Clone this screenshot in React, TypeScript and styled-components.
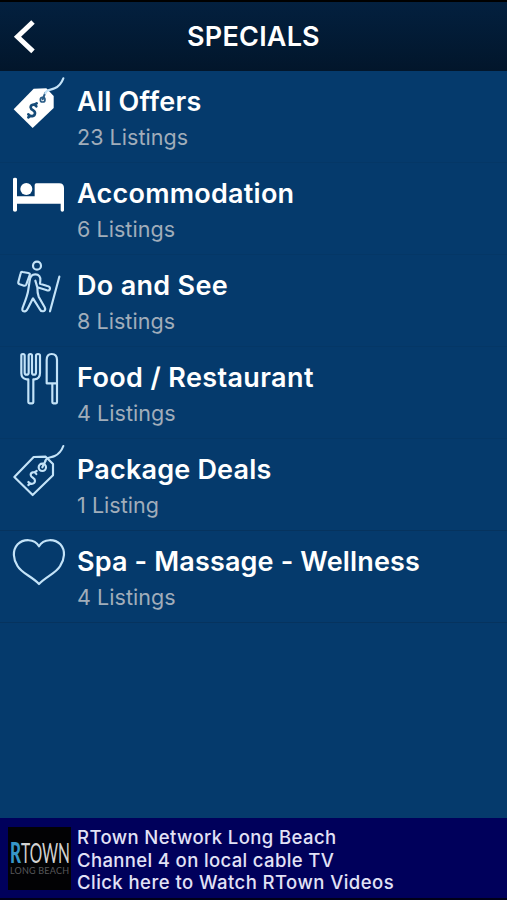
import React from "react";
import styled, { createGlobalStyle } from "styled-components";

const GlobalStyle = createGlobalStyle`
  * { box-sizing: border-box; }
  body { margin: 0; background: #053a6c; }
`;

const Screen = styled.main`
  display: flex;
  flex-direction: column;
  width: 507px;
  height: 900px;
  overflow: hidden;
  background: #053a6c;
  color: #fff;
  font-family: Inter, "Liberation Sans", sans-serif;
`;

const Header = styled.header`
  display: grid;
  grid-template-columns: 60px 1fr 60px;
  align-items: center;
  height: 71px;
  flex: none;
  border-top: 2px solid #000;
  background: linear-gradient(#03203f, #02162b);
`;

const BackButton = styled.button`
  height: 69px;
  padding: 0;
  border: 0;
  background: none;
  svg { display: block; }
`;

const PageTitle = styled.h1`
  margin: 1px 0 0;
  text-align: center;
  font-size: 27px;
  font-weight: 600;
  line-height: 34px;
  letter-spacing: 0.2px;
`;

const List = styled.ul`
  flex: 1;
  margin: 0;
  padding: 0;
  list-style: none;
`;

const Row = styled.li`
  display: flex;
  height: 92px;
  border-bottom: 1px solid #053766;
  &:nth-last-child(-n + 2) { border-bottom-color: #06335e; }
`;

const RowIcon = styled.svg`
  flex: none;
  width: 77px;
  height: 92px;
  fill: none;
  stroke: #c4e3f8;
  stroke-width: 6.5;
  stroke-linecap: round;
  stroke-linejoin: round;
`;

const RowText = styled.div`
  padding-top: 14px;
  white-space: nowrap;
`;

const RowTitle = styled.div<{ $spacing: number }>`
  font-size: 27px;
  font-weight: 600;
  line-height: 34px;
  letter-spacing: ${(p) => p.$spacing}px;
`;

const RowCount = styled.div`
  margin-top: 4px;
  color: #a1adba;
  font-size: 21.5px;
  line-height: 28px;
  letter-spacing: 0.05px;
`;

const Banner = styled.footer`
  display: flex;
  flex: none;
  height: 82px;
  border-bottom: 2px solid #000018;
  background: #00005b;
`;

const Logo = styled.div`
  flex: none;
  width: 63px;
  height: 63px;
  margin: 9px 6px 0 8px;
  background: #020204;
  svg { display: block; }
`;

const BannerText = styled.div`
  padding-top: 8px;
  color: #e2e2f6;
  font-size: 18.5px;
  font-weight: 550;
  line-height: 22.7px;
  white-space: nowrap;
`;

const BannerLine = styled.div<{ $spacing: number }>`
  letter-spacing: ${(p) => p.$spacing}px;
`;

const CORD = "M136 78C139 65 152 69 164 63C179 56 186 44 190 33";
const TAG = "M43 126L101 66L137 65L159 87V121L98 180Z";
const DOLLAR = "M109 117C103 108 92 112 92 120C93 130 106 127 105 138C104 147 92 150 85 141M103 112L110 108M91 146L85 150";

const OffersIcon = () => (
  <RowIcon viewBox="0 3 231 276">
    <g transform="translate(0 -8)">
      <path d="M41 126L101 64L139 63L161 86V122L98 182Z" fill="#fff" stroke="none" />
      <circle cx="128" cy="97" r="7" stroke="#285b86" strokeWidth="5" />
      <path d="M128 96L136 76" stroke="#285b86" strokeWidth="6" />
      <path d={DOLLAR} stroke="#164b78" strokeWidth="8" />
      <path d={CORD} />
    </g>
  </RowIcon>
);

const BedIcon = () => (
  <RowIcon viewBox="0 9 231 276">
    <g fill="#fff" stroke="none">
      <path d="M39 57Q39 53 45 53Q51 53 51 57V109H104V75Q104 70 109 70H178Q192 70 192 84V151Q192 155 187 155Q182 155 182 151V131H51V151Q51 155 45 155Q39 155 39 151Z" />
      <circle cx="79" cy="87" r="18" />
    </g>
  </RowIcon>
);

const HikerIcon = () => (
  <RowIcon viewBox="0 15 231 276">
    <circle cx="111" cy="47" r="12" />
    <path d="M85 69L68 66Q63 65 62 70L55 96Q54 101 59 103L72 107Q77 108 79 103L89 75Q91 70 85 69Z" />
    <path d="M112 111C112 119 112 130 116 140L134 172Q138 180 132 183Q123 186 119 177L99 145L83 176Q79 185 73 184Q64 184 68 173C74 157 83 136 85 119L89 92C90 80 97 73 106 73C117 73 122 81 121 91L120 101L142 108Q150 109 150 116Q149 123 141 121L112 112L106 92M178 80L150 184" />
  </RowIcon>
);

const CutleryIcon = () => (
  <RowIcon viewBox="0 21 231 276">
    <path d="M64 46Q64 42 69 42Q74 42 74 47V98Q74 104 80 104Q86 104 86 98V47Q86 42 91 42Q96 42 96 47V98Q96 104 102 104Q108 104 108 98V47Q108 42 114 42Q120 42 120 47V99Q120 116 104 118H100V187Q100 190 97 190H89Q85 190 85 187V118H80Q64 116 64 100Z" />
    <path d="M140 130V60Q140 42 155 42Q171 42 171 60V187Q171 190 168 190H160Q157 190 157 187V130ZM140 130H170" />
  </RowIcon>
);

const PackageIcon = () => (
  <RowIcon viewBox="0 12 231 276">
    <path d={TAG} />
    <circle cx="127" cy="97" r="11" />
    <path d={CORD} />
    <path d="M136 79L127 97" />
    <path d={DOLLAR} />
  </RowIcon>
);

const HeartIcon = () => (
  <RowIcon viewBox="0 3 231 276">
    <path d="M117 49C103 24 69 27 53 43C36 62 40 88 52 107C65 130 96 139 117 162C138 139 168 130 181 107C193 88 198 62 181 43C165 27 131 24 117 49Z" />
  </RowIcon>
);

const categories = [
  { title: "All Offers", count: "23 Listings", Icon: OffersIcon, spacing: 0.25 },
  { title: "Accommodation", count: "6 Listings", Icon: BedIcon, spacing: 0.25 },
  { title: "Do and See", count: "8 Listings", Icon: HikerIcon, spacing: 0.3 },
  { title: "Food / Restaurant", count: "4 Listings", Icon: CutleryIcon, spacing: 0.38 },
  { title: "Package Deals", count: "1 Listing", Icon: PackageIcon, spacing: 0.18 },
  { title: "Spa - Massage - Wellness", count: "4 Listings", Icon: HeartIcon, spacing: 0.15 },
];

export default function App() {
  return (
    <Screen>
      <GlobalStyle />
      <Header>
        <BackButton aria-label="Back">
          <svg width="60" height="69" viewBox="0 0 60 69" fill="none" stroke="#fff" strokeWidth="5">
            <path d="M33 20L17.5 34.7L33 49.4" />
          </svg>
        </BackButton>
        <PageTitle>SPECIALS</PageTitle>
      </Header>
      <List>
        {categories.map(({ title, count, Icon, spacing }) => (
          <Row key={title}>
            <Icon />
            <RowText>
              <RowTitle $spacing={spacing}>{title}</RowTitle>
              <RowCount>{count}</RowCount>
            </RowText>
          </Row>
        ))}
      </List>
      <Banner>
        <Logo>
          <svg width="63" height="63" viewBox="0 0 63 63" fontFamily="Lato, sans-serif">
            <text x="2" y="36" fontSize="28" fontWeight="900" fill="#3796c8" textLength="11" lengthAdjust="spacingAndGlyphs">R</text>
            <text x="13" y="35.5" fontSize="27" fill="#d2d2d2" textLength="49" lengthAdjust="spacingAndGlyphs">TOWN</text>
            <text x="2" y="47" fontSize="9" fill="#58585b" textLength="59">LONG BEACH</text>
          </svg>
        </Logo>
        <BannerText>
          <BannerLine $spacing={0.4}>RTown Network Long Beach</BannerLine>
          <BannerLine $spacing={0.36}>Channel 4 on local cable TV</BannerLine>
          <BannerLine $spacing={0.45}>Click here to Watch RTown Videos</BannerLine>
        </BannerText>
      </Banner>
    </Screen>
  );
}
